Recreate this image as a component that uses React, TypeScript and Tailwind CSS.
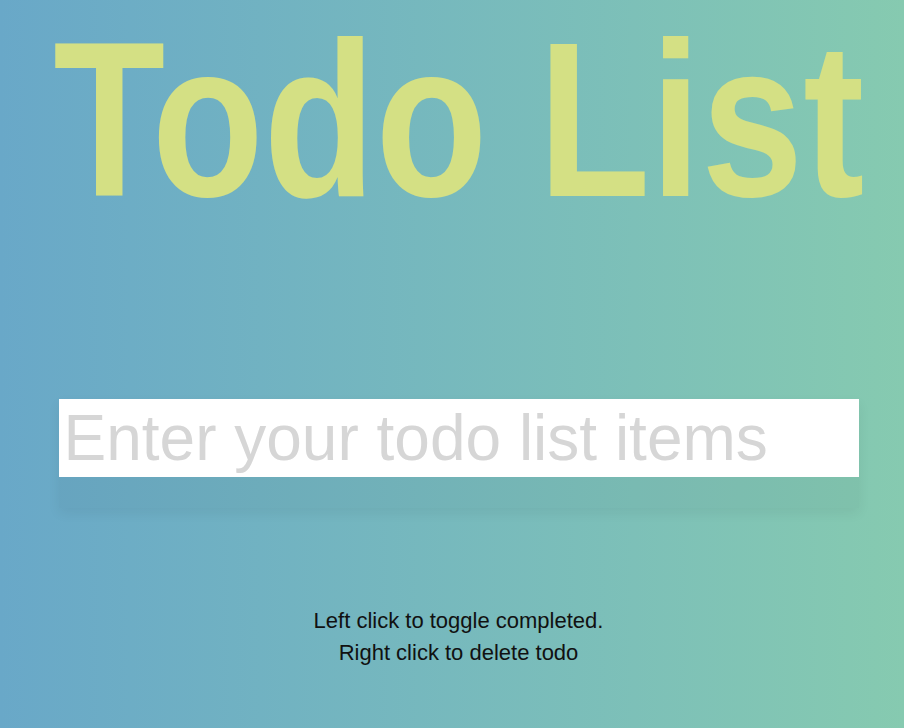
import { useState } from "react";

export default function App() {
  const [text, setText] = useState("");

  return (
    <div
      className="min-h-[728px] w-full bg-linear-to-r from-[#69a8c8] to-[#86cab0] pl-[13px] overflow-hidden"
      style={{ fontFamily: '"Liberation Sans", Arial, sans-serif' }}
    >
      {/* Title */}
      <div className="pt-[10px] h-[236px] flex justify-center">
        <h1 className="inline-block scale-x-[0.833] text-[220px] leading-none font-bold text-[#d4e084] whitespace-nowrap">
          Todo List
        </h1>
      </div>

      {/* Form */}
      <div className="mt-[163px] mx-auto w-[800px] bg-black/[0.03] shadow-[0_5px_12px_rgba(0,0,0,0.06)]">
        <input
          value={text}
          onChange={(e) => setText(e.target.value)}
          placeholder="Enter your todo list items"
          className="block w-full h-[78px] bg-white pl-[5px] text-[64px] text-[#333] placeholder:text-[#d6d6d6] outline-none"
        />
        <div className="h-[31px]" />
      </div>

      {/* Help */}
      <div className="mt-[97px] text-center text-[22px] leading-[32px] text-[#111]">
        <p>Left click to toggle completed.</p>
        <p>Right click to delete todo</p>
      </div>
    </div>
  );
}
